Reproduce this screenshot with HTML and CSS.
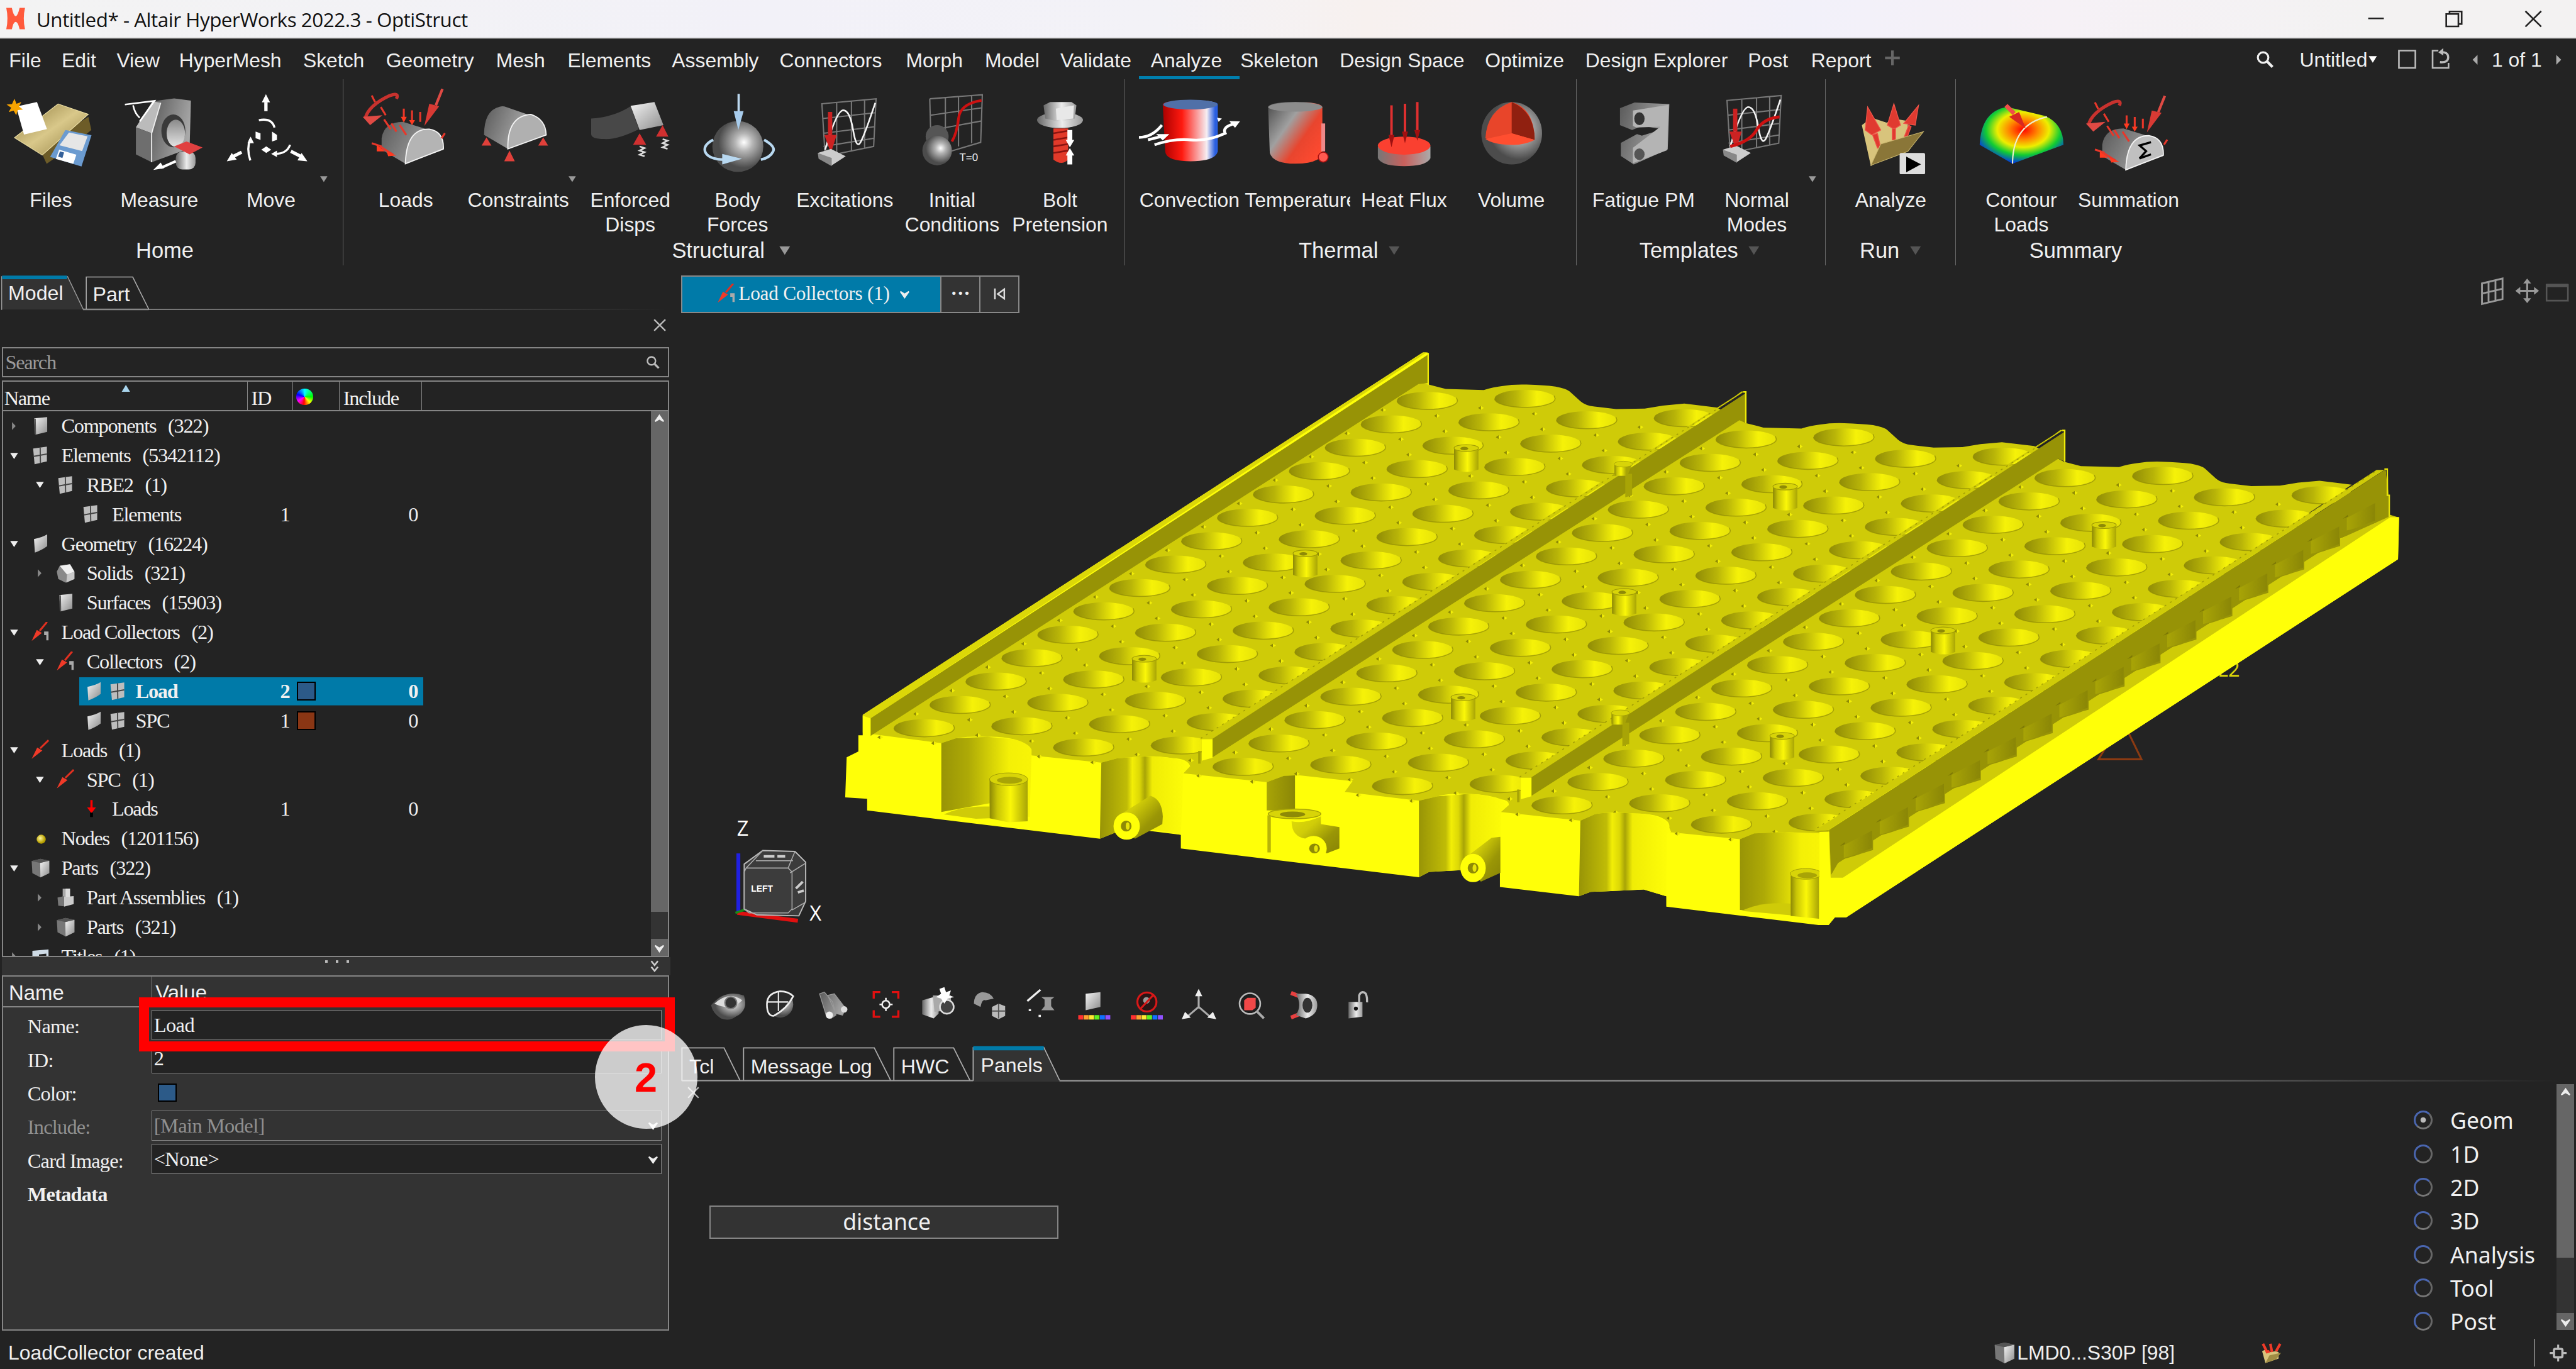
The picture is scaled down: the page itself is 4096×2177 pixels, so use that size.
FILE: index.html
```html
<!DOCTYPE html>
<html lang="en">
<head>
<meta charset="utf-8">
<title>Untitled* - Altair HyperWorks 2022.3 - OptiStruct</title>
<link rel="stylesheet" href="styles.css">
</head>
<body>
<svg class="defs" width="0" height="0" aria-hidden="true">
  <defs>
    <linearGradient id="steel" x1="0" x2="1"><stop offset="0" stop-color="#666"/><stop offset=".55" stop-color="#ececec"/><stop offset="1" stop-color="#9a9a9a"/></linearGradient>
    <linearGradient id="steelV" x1="0" x2="0" y2="1"><stop offset="0" stop-color="#8a8a8a"/><stop offset="1" stop-color="#e4e4e4"/></linearGradient>
    <linearGradient id="steelD" x1="0" x2="1" y2=".4"><stop offset="0" stop-color="#5a5a5a"/><stop offset="1" stop-color="#a8a8a8"/></linearGradient>
    <linearGradient id="paper" x1="0" x2="1" y2="1"><stop offset="0" stop-color="#f4f4f4"/><stop offset="1" stop-color="#8c8c8c"/></linearGradient>
    <linearGradient id="gold" x1="0" x2="1" y2="1"><stop offset="0" stop-color="#8d7a3c"/><stop offset=".5" stop-color="#d9c88a"/><stop offset="1" stop-color="#8d7a3c"/></linearGradient>
    <linearGradient id="hotcold" x1="0" x2="1"><stop offset="0" stop-color="#a00"/><stop offset=".35" stop-color="#ff1a10"/><stop offset=".8" stop-color="#f6eef2"/><stop offset=".95" stop-color="#2a5fe0"/></linearGradient>
    <linearGradient id="warm" x1="0" x2="1" y2=".8"><stop offset="0" stop-color="#4a4a4a"/><stop offset=".4" stop-color="#a0a0a0"/><stop offset=".68" stop-color="#e8452e"/><stop offset="1" stop-color="#ff4a30"/></linearGradient>
    <linearGradient id="puck" x1="0" x2="1"><stop offset="0" stop-color="#777"/><stop offset=".5" stop-color="#c9605c"/><stop offset="1" stop-color="#aaa"/></linearGradient>
    <radialGradient id="ball" cx=".62" cy=".42"><stop offset="0" stop-color="#fff"/><stop offset=".35" stop-color="#b4b4b4"/><stop offset="1" stop-color="#4c4c4c"/></radialGradient>
    <radialGradient id="contour" cx=".52" cy=".4" r=".62"><stop offset="0" stop-color="#f00"/><stop offset=".28" stop-color="#f80"/><stop offset=".5" stop-color="#ee0"/><stop offset=".72" stop-color="#1c3"/><stop offset="1" stop-color="#02f"/></radialGradient>
    <radialGradient id="nodeg" cx=".4" cy=".4"><stop offset="0" stop-color="#fff8a0"/><stop offset="1" stop-color="#b8a000"/></radialGradient>

    <symbol id="i-open" viewBox="0 0 10 10"><path d="M2 3h6L5 7.6z" fill="#eee"/></symbol>
    <symbol id="i-closed" viewBox="0 0 10 10"><path d="M3.400 2l2.800 3-2.800 3z" fill="#888"/></symbol>
    <symbol id="i-sheet" viewBox="0 0 14 14"><path d="M2.600 1.800L11.600 1v10L3.600 13z" fill="url(#paper)"/><path d="M2.600 1.800L3.800 2 4 13l-1-.4z" fill="#555"/></symbol>
    <symbol id="i-surf" viewBox="0 0 14 14"><path d="M2.600 4Q8 3 11.600.8v8Q8 11.500 3.200 13.200z" fill="url(#paper)"/></symbol>
    <symbol id="i-mesh" viewBox="0 0 14 14"><path d="M2 2.200L11.400 1v10L3 13z" fill="#bdbdbd"/><path d="M6.800 1.500L7 12M2.300 7.600L11.400 6" stroke="#444" stroke-width=".8"/></symbol>
    <symbol id="i-solid" viewBox="0 0 14 14"><path d="M1 6L3 2l7-1 3 5v5l-6 2.500L2 11z" fill="#8a8a8a"/><path d="M3 2l7-1 3 5-5 2z" fill="#f0f0f0"/><path d="M8 8l5-2v5l-5.500 2.500z" fill="#c8c8c8"/></symbol>
    <symbol id="i-box" viewBox="0 0 14 14"><path d="M1 2.200L7 .8l6 1.200v8.500L7 13.400 1.500 10.500z" fill="#777"/><path d="M6.800 3.500L13 2v8.500L7 13.400z" fill="url(#paper)"/><path d="M1 2.200L7 .8l6 1.200-6.200 1.500z" fill="#555"/></symbol>
    <symbol id="i-asm" viewBox="0 0 14 14"><path d="M5 1h5v6H5z" fill="#aaa"/><path d="M1.500 7L6 6v7l-4-.5z" fill="#777"/><path d="M6 6.500l6.500-.5v5.500L6 13.200z" fill="#ccc"/><path d="M7 1h3v5.500H7z" fill="#ddd"/></symbol>
    <symbol id="i-load" viewBox="0 0 14 14"><path d="M12.500.5L6.800 6" stroke="#e03020" stroke-width="1.300"/><path d="M1 13.200L4.800 5.500 8.300 7.500z" fill="#f03a28"/></symbol>
    <symbol id="i-loadcol" viewBox="0 0 14 14"><path d="M11.500 0L6.500 6" stroke="#e03020" stroke-width="1.300"/><path d="M1 13L4.500 5.500 8 7.500z" fill="#f03a28"/><path d="M9.500 6.500h3v6h-1.500V9H9.500z" fill="#aaa"/></symbol>
    <symbol id="i-down" viewBox="0 0 14 14"><path d="M7.500 1v5" stroke="red" stroke-width="1.500"/><path d="M4.500 6h6L7.500 10z" fill="red"/><path d="M7.500 9.500v3" stroke="#000" stroke-width="2"/></symbol>
    <symbol id="i-node" viewBox="0 0 14 14"><circle cx="7.500" cy="7.500" r="3.100" fill="url(#nodeg)"/></symbol>
    <symbol id="i-title" viewBox="0 0 14 14"><path d="M1.500 3l11-1v10l-11 2z" fill="#cfdbe6"/><path d="M6 5.500l5-.6v1.500l-5 .6zM3 10l7-1v1l-7 1z" fill="#222"/></symbol>
    <symbol id="i-find" viewBox="0 0 10 10"><circle cx="4" cy="4" r="2.900" fill="none" stroke="currentColor" stroke-width="1.100"/><path d="M6.200 6.200l3 3" stroke="currentColor" stroke-width="1.500"/></symbol>
    <symbol id="i-x" viewBox="0 0 10 10"><path d="M1 1l8 8M9 1L1 9" stroke="currentColor" stroke-width="1.100"/></symbol>
    <symbol id="i-chev" viewBox="0 0 10 10"><path d="M1.800 3.200L5 5.200l3.200-2L5 7.800z" fill="#eee" stroke="#eee"/></symbol>
    <symbol id="i-tri" viewBox="0 0 10 10"><path d="M0 1h10L5 9z" fill="currentColor"/></symbol>
  </defs>
</svg>

<div class="app">
  <header class="titlebar">
    <svg class="logo" viewBox="4 4 12 15"><path d="M4 5h3.400q1 5 2.300 5t2.400-5h3.300q-1.500 6.500 0 13h-3.300q-1-4.500-2.400-4.500T7.400 18H4q1.400-6.500 0-13z" fill="#ff5a3c"/></svg>
    <span class="title">Untitled* - Altair HyperWorks 2022.3 - OptiStruct</span>
    <svg class="winbtns" viewBox="1434 0 134 23"><g fill="none" stroke="#222" stroke-width="1"><path d="M1441.500 11.200h9.500M1489 8.500h7.400v7.600h-7.400zM1491 8.300V7h7.400v7.600h-1.800M1537.200 6.800l9.600 9.400M1546.800 6.800l-9.600 9.400"/></g></svg>
  </header>

  <nav class="menubar">
    <div class="menus">
      <span>File</span><span>Edit</span><span>View</span><span>HyperMesh</span><span>Sketch</span><span>Geometry</span><span>Mesh</span><span>Elements</span><span>Assembly</span><span>Connectors</span><span>Morph</span><span>Model</span><span>Validate</span><span class="on">Analyze</span><span>Skeleton</span><span>Design Space</span><span>Optimize</span><span>Design Explorer</span><span>Post</span><span>Report</span>
      <svg class="plus" viewBox="0 0 10 10"><path d="M5 .5v9M.5 5h9" stroke="#666" stroke-width="1.600"/></svg>
    </div>
    <div class="session">
      <svg class="find"><use href="#i-find"/></svg>
      <span class="sname">Untitled</span><svg class="tri"><use href="#i-tri"/></svg>
      <svg class="pages" viewBox="1456 28 40 16" fill="none" stroke="#bbb"><path d="M1460 30.500h10v10.500h-10zM1484 30.500h-3.500v10.500h9.700V38"/><path d="M1485 31.500q5-.5 5 3t-5 3" stroke-width="1.300"/><path d="M1487 29l-3 2.500 3 2z" fill="#bbb" stroke="none"/></svg>
      <svg class="pg" viewBox="0 0 5 10"><path d="M4 2v6L1 5z" fill="#aaa"/></svg>
      <span class="pgtext">1 of 1</span>
      <svg class="pg" viewBox="0 0 5 10"><path d="M1 2v6l3-3z" fill="#aaa"/></svg>
    </div>
  </nav>

  <section class="ribbon">
    <div class="group g-home">
      <div class="tools">
        <div class="tool"><svg viewBox="0 50 62 56">
          <path d="M53.800 71l1.800 8L42 90 28.400 99.600 24 90z" fill="#6d5c28"/><path d="M35.300 63.100L53.800 69.400 25.700 94.300 8.800 83.700z" fill="url(#gold)" stroke="#efe2a8" stroke-width=".4"/>
          <path d="M9.800 64.700L22.500 62l6.100 16.400-14 3.400z" fill="#fff"/><path d="M8.800 60l1.200 3 3-1-1.500 2.600 2.500 2-3.200.2-.9 3.200-1.600-2.800-3 .9 1.500-2.700L4 63.500l3.300-.3z" fill="#f9a400"/>
          <path d="M39.800 79l15.900 3.200-6.100 19-19.100-5.800z" fill="#6b9bd0"/><path d="M42 80.500l11.300 2.300-3.300 9-13.800-3.500z" fill="#e6e6e6"/><path d="M36 91l10.500 3-1.900 5.600-10.600-3z" fill="#fff"/><path d="M36.500 92l2.500.7-1 3.300-2.600-.8z" fill="#35619a"/></svg><p>Files</p></div>
        <div class="tool"><svg viewBox="62 50 70 56">
          <path d="M92.800 61.500L106 59.800l10.200 1.300-.8 29L92.300 98.600V81z" fill="url(#steelD)"/><path d="M92.800 61.500l5 .9L92.300 81l-9.600-3.600z" fill="#bbb"/><path d="M82.700 77.400L92.300 81v17.600L82.700 93.800z" fill="#6e6e6e"/><path d="M92.300 98.600V81l5.500-18.600" fill="none" stroke="#eee" stroke-width=".7"/>
          <ellipse cx="105.500" cy="79.500" rx="7.300" ry="10" fill="#3a3a3a"/><ellipse cx="107" cy="81" rx="5.600" ry="8.300" fill="url(#steelV)"/>
          <path d="M76 63.500l18-2.200-9 12.500M81 64q1 5 4 7.500" fill="none" stroke="#fff"/><rect x="107" y="92" width="12" height="11" rx="4" fill="url(#steel)"/><path d="M106 89l7.500-3 9.800 3.600-7.900 4.200z" fill="#e04040"/><path d="M107 98l-9 4" stroke="#fff" stroke-width="1.600"/><path d="M93.300 103.300l4.500-4.500 2 3.500z" fill="#fff"/></svg><p>Measure</p></div>
        <div class="tool"><svg viewBox="132 50 66 56"><g fill="#fff" stroke="#fff">
          <path d="M161.800 67.500V62M142 95l5-2.500M183 95l-6-3" stroke-width="2"/><path d="M161.800 57.200l2.500 5h-5zM138 98l3-5 3 4zM187 98l-6-.5 2.500-4.500z" stroke="none"/>
          <path d="M157.500 73q8-1.500 9.500 4.500M152.300 97.500q-2.500-7 0-13M176.500 88q-2 5.500-9 5.500" fill="none" stroke-width="1.300"/><path d="M152.500 83l2 4h-4zM165 93.500l3.500-2v4z" stroke="none"/>
          <path d="M155.500 80l3 1v4l-3-1zM165.500 80l3 2v3l-3 1zM162 89l3 2-3 2-3-2z" stroke="none"/></g></svg><p>Move</p></div>
        <svg class="more"><use href="#i-tri"/></svg>
      </div>
      <h2>Home</h2>
    </div>
    <div class="group g-structural">
      <div class="tools">
        <div class="tool w66"><svg viewBox="213.700 50 66 56">
          <path d="M232 84q1.500-10 13-10l16 5q9 1.500 8.600 12L246.500 99.500 232 91z" fill="url(#steelD)"/><path d="M246.500 99.500Q247 78 261 78.500q9 1.500 8.600 12z" fill="#b4b4b4" stroke="#f4f4f4" stroke-width=".7"/>
          <g id="loadset"><path d="M241 60q2-4-4-2-13 6-15 14" fill="none" stroke="#c8322e" stroke-width="2"/><path d="M220.500 71l12-1-7.500 6z" fill="#e04a44"/><path d="M269 54l-4 10" stroke="#e04a44" stroke-width="1.600"/><path d="M261 63l6 1.500-9 12z" fill="#d83a34"/><path d="M245.500 66v6M250.500 67v7M255.500 68v6M233.500 72.500l4 6M238 75l3 5M243 76l4 6M226 87l6 2M231 89l8 5M270.500 81l-2 3M226 58l2 4M231.500 65l3 5" stroke="#e8372a" stroke-width="1.200"/><path d="M243.700 71h3.600l-1.800 3.500zM248.700 73h3.600l-1.800 3zM229 88l5 4h-5zM235 92l6 2.500-5 .5z" fill="#ff3a20"/></g></svg><p>Loads</p></div>
        <div class="tool w71"><svg viewBox="279.700 50 71 56"><path d="M294.500 82q0-15 9.500-17.200 2-.6 4 .2l13 4.500q-11 3-12 21z" fill="url(#steelD)"/><path d="M309 90.500q-.5-20 14-21 9 3 9.300 12.500z" fill="#b0b0b0" stroke="#f4f4f4" stroke-width=".7"/><path d="M296 83.500l3 5h-6zM310 91.500l3.200 6.500h-6.400zM330.500 83.500l3 5h-6z" fill="#e0403a"/></svg><p>Constraints</p></div>
        <svg class="more mid"><use href="#i-tri"/></svg>
        <div class="tool w65"><svg viewBox="350.700 50 65.300 56"><path d="M359.500 72q14-1 24-7.500l5 14q-13 6.500-21 6-8 0-8-3z" fill="#484848"/><path d="M383.500 64.300L398 62l5.500 14-14.500 3z" fill="url(#paper)"/><path d="M389 81l4 7h-8zM403 76l3.500 7h-7.500z" fill="#d03030"/><path d="M389 89l3 1-3 1.500 3 1-3 1.500 3 1M403 84.500l3 1-3 1.500 3 1-3 1.500 3 1" stroke="#ddd" fill="none"/></svg><p>Enforced<br>Disps</p></div>
        <div class="tool w65"><svg viewBox="416 50 65.300 56"><circle cx="449" cy="89" r="15.500" fill="url(#ball)"/><path d="M449.500 57v14" stroke="#bcd8f0" stroke-width="1.400"/><path d="M446.500 67.500h6L449.300 79z" fill="#a8ccec"/><path d="M434 85q-6 3-5 7 2 5 12 5M465 85q7 4 5.500 7-2 4-7.500 5" fill="none" stroke="#b8d8f0" stroke-width="1.600"/><path d="M439.500 93.500l12 3-12 3.500z" fill="#b8d8f0"/></svg><p>Body<br>Forces</p></div>
        <div class="tool w65"><svg viewBox="481.300 50 65.300 56"><g id="plot"><path d="M500 63l33-3-1.500 29L502 95zM509 62v32M518 61.500V92M526 61v29M500.500 72l32-3.500M501 81l31-4M501 89l31-5" fill="none" stroke="#777" stroke-width=".8"/><path d="M502 91q7-24 11-24t6 12 4.500 7.500 9-24" fill="none" stroke="#f4f4f4" stroke-width="1"/><path d="M505 68v14" stroke="#c22" stroke-width="2.600"/><path d="M501.500 82h7.500l-3.500 11z" fill="#c22"/><path d="M497.500 93l8-2.500 9 4.500-8.500 5.500z" fill="#ccc"/><path d="M497.500 93l8.500 3v5l-8-4.500z" fill="#888"/></g></svg><p>Excitations</p></div>
        <div class="tool w65"><svg viewBox="546.600 50 65.300 56"><path d="M565.500 60l32-2.500-1 29L578 92M565.500 60l.5 18M575 59v20M583 59v30M591 58v29M566 70l31-4.500M567 79l30-5.500" fill="none" stroke="#777" stroke-width=".8"/><path d="M579 86q3-5 4-14t14-11" fill="none" stroke="#c11" stroke-width="1.600"/><circle cx="570" cy="83" r="7" fill="#555"/><circle cx="570" cy="91.500" r="9" fill="url(#ball)"/><text x="583.500" y="98" class="t0">T=0</text></svg><p>Initial<br>Conditions</p></div>
        <div class="tool w66"><svg viewBox="611.900 50 66 56"><path d="M641 78h9v19q-4 4-9 0z" fill="#e23a2a"/><path d="M641 81l9-1.500M641 85l9-1.500M641 89l9-1.500M641 93l9-1.500" stroke="#8a1410"/><ellipse cx="645" cy="73" rx="14" ry="4.800" fill="url(#steel)"/><path d="M635 64l4-2h13l3 2-1 8-9 2-9-2z" fill="url(#steel)"/><path d="M642.500 66l11-2-.5 8-10 1z" fill="#e8e8e8"/><path d="M651 79v7M651 100v-7" stroke="#fff" stroke-width="3"/><path d="M648.500 85h5.200L651 89.500zM648.500 94.500h5.200L651 90z" fill="#fff"/></svg><p>Bolt<br>Pretension</p></div>
      </div>
      <h2>Structural <svg class="htri lit"><use href="#i-tri"/></svg></h2>
    </div>
    <div class="group g-thermal">
      <div class="tools">
        <div class="tool w65"><svg viewBox="691.600 50 65.300 56"><path d="M708 63.500q0-2.500 17-2.500t16.500 2.500V92q-1.500 6-16.500 6t-15.500-6z" fill="url(#hotcold)"/><ellipse cx="724.800" cy="63.500" rx="16.500" ry="3" fill="#5070a8"/><path d="M693.500 83.500q8 0 14-7.500M699 85l8-2M703 88q12-4 22-3t21-4q-2-4 6-6" fill="none" stroke="#fff" stroke-width="1.700"/><path d="M704 81.500h8l-4 3.800zM748.500 73.500l6.500.2-3 4zM741 71.500l3 .5-2 2z" fill="#fff"/></svg><p>Convection</p></div>
        <div class="tool w65"><svg viewBox="756.900 50 65.300 56"><path d="M772 65q1-3 16.500-3T805 65v29q-3 5.500-16.500 5.500T773 93z" fill="url(#warm)"/><ellipse cx="788.500" cy="65" rx="16.500" ry="2.800" fill="#8c8c8c"/><path d="M805.500 75v17" stroke="#e88" stroke-width="2.400"/><circle cx="805.500" cy="95.500" r="3" fill="#ff5a50" stroke="#a11" stroke-width=".6"/></svg><p class="cut">Temperature</p></div>
        <div class="tool w65"><svg viewBox="822.200 50 65.300 56"><path d="M839 89v7q2 5 16 5t16-5v-7z" fill="url(#puck)"/><ellipse cx="855" cy="88.500" rx="16" ry="5.500" fill="#fa4030"/><path d="M847.300 64v22M855.500 63v20M863 62v20" stroke="#e03030" stroke-width="1.500"/><path d="M845.500 82h3.600l-1.800 7.500zM853.700 80h3.600l-1.800 7zM861.200 79h3.600l-1.800 6.500z" fill="#a01010"/></svg><p>Heat Flux</p></div>
        <div class="tool w65"><svg viewBox="887.500 50 65.300 56"><ellipse cx="920.300" cy="81" rx="18.500" ry="19" fill="url(#ball)"/><path d="M920.300 62q-15 5-16 22 8 4 16 3.500 8 0 14-4-1-18-14-21.500z" fill="#e8452a"/><path d="M920.300 62v19l14 4q0-17-14-23z" fill="#902010"/><path d="M904.300 84.500l16-3.500 14 4q-7 3.500-15 3-10 0-15-3.500z" fill="#ff4e30"/></svg><p>Volume</p></div>
      </div>
      <h2>Thermal <svg class="htri"><use href="#i-tri"/></svg></h2>
    </div>
    <div class="group g-templates">
      <div class="tools">
        <div class="tool w66"><svg viewBox="967 50 67 56"><path d="M986 65.500L995 62l21.500 1-1 28-21 9.300L986.500 95V87l10-5.500 3 1 13-4-13-2-6 2.500-7.500-3z" fill="url(#steelD)"/><path d="M994 67l22-3.500-1 28-21 8V90l17-13-15 .5-2-1z" fill="#b4b4b4"/><ellipse cx="998" cy="72" rx="3.200" ry="4" fill="#333"/><ellipse cx="998" cy="94" rx="3.200" ry="3.600" fill="#555"/></svg><p>Fatigue PM</p></div>
        <div class="tool w72"><svg viewBox="1033 50 72 56"><use href="#plot" x="551" y="-2"/><path d="M1053 89q12-3 16-10t14-8" fill="none" stroke="#c11" stroke-width="1.800"/></svg><p>Normal<br>Modes</p></div>
        <svg class="more"><use href="#i-tri"/></svg>
      </div>
      <h2>Templates <svg class="htri"><use href="#i-tri"/></svg></h2>
    </div>
    <div class="group g-run">
      <div class="tools">
        <div class="tool w79"><svg viewBox="1111.500 50 79 56"><path d="M1133.500 76l6-4.500 9 3 7-2 6 1v10l-22.500 17.500z" fill="#d8c47c"/><g fill="#e03a30" stroke="#f0554a" stroke-width=".5"><path d="M1137 65l8 14-5.500 3-4-3zM1153 63l4 13-4 2.500-4-2.500zM1168 64l-2 12-7-1z"/><path d="M1140 82l3 8h2l-2-9zM1152 78v8h2v-8zM1162 76l-3 8 1.500 1 3-8z"/></g><path d="M1139 100.500l6-13 26-7.500-9.500 12z" fill="#8a7638" stroke="#cbb870" stroke-width=".4"/><rect x="1156.500" y="93" width="15.500" height="13" rx="1" fill="#ddd"/><path d="M1160.500 95.200l9 4.700-9 4.800z" fill="#000"/></svg><p>Analyze</p></div>
      </div>
      <h2>Run <svg class="htri"><use href="#i-tri"/></svg></h2>
    </div>
    <div class="group g-summary">
      <div class="tools">
        <div class="tool w65"><svg viewBox="1197.800 50 65.300 56"><path d="M1205 88q1-21 17-23l23 5.500q11 5 11 17.500L1225 99.500z" fill="url(#contour)"/><path d="M1225 99.500q0-24 21-28.500" fill="none" stroke="#eec" stroke-width=".8"/><path d="M1221 64l5 5" stroke="#f05048" stroke-width="2.600"/><path d="M1223 71l6-3 4 10z" fill="#d82820"/></svg><p>Contour<br>Loads</p></div>
        <div class="tool w65"><svg viewBox="1263.100 50 66 56"><g transform="translate(1048 4)"><path d="M232 84q1.500-10 13-10l16 5q9 1.500 8.600 12L246.500 99.500 232 91z" fill="url(#steelD)"/><path d="M246.500 99.500Q247 78 261 78.500q9 1.500 8.600 12z" fill="#c0c0c0" stroke="#f4f4f4" stroke-width=".7"/><use href="#loadset" x="1.500"/><path d="M262 82.500l-7 2 4 3.500-4 4.500 7-2.500" fill="none" stroke="#000" stroke-width="1.300"/></g></svg><p>Summation</p></div>
      </div>
      <h2>Summary</h2>
    </div>
  </section>

  <main class="work">
    <aside class="left">
      <div class="tabs ltabs">
        <svg class="tabshape" viewBox="0 166 408 23" fill="none"><path d="M1.300 188.300V168h39.500l9.800 20.300z" fill="#333"/><path d="M1 188.500V168M41 168l9.700 20.200" stroke="#999" stroke-width=".6"/><path d="M1.300 168.700h39.500" stroke="#007aa8" stroke-width="2.200"/><path d="M50.500 188.200h40" stroke="#888" stroke-width=".9"/><path d="M52.500 188V168.500h28.300l9.800 19.700" stroke="#aaa" stroke-width=".6"/><path d="M90 187.900h316v.6H90z" fill="url(#fadeL)"/><defs><linearGradient id="fadeL"><stop offset="0" stop-color="#999"/><stop offset="1" stop-color="#232323"/></linearGradient></defs></svg>
        <span>Model</span><span>Part</span>
      </div>
      <div class="closebar"><svg><use href="#i-x"/></svg></div>
      <div class="search"><span>Search</span><svg><use href="#i-find"/></svg></div>
      <div class="tree">
        <div class="thead"><span>Name</span><span>ID</span><span><i class="wheel"></i></span><span>Include</span><svg class="sort" viewBox="0 0 6 5"><path d="M0 5l3-5 3 5z" fill="#a8d4ec"/></svg></div>
        <div class="tbody">
          <div class="rows">
            <div class="row d0"><div class="nm"><svg class="c"><use href="#i-closed"/></svg><svg class="ic"><use href="#i-sheet"/></svg><b>Components</b><em>(322)</em></div></div>
            <div class="row d0"><div class="nm"><svg class="c"><use href="#i-open"/></svg><svg class="ic"><use href="#i-mesh"/></svg><b>Elements</b><em>(5342112)</em></div></div>
            <div class="row d1"><div class="nm"><svg class="c"><use href="#i-open"/></svg><svg class="ic"><use href="#i-mesh"/></svg><b>RBE2</b><em>(1)</em></div></div>
            <div class="row d2"><div class="nm"><i class="c"></i><svg class="ic"><use href="#i-mesh"/></svg><b>Elements</b></div><span>1</span><i></i><span>0</span></div>
            <div class="row d0"><div class="nm"><svg class="c"><use href="#i-open"/></svg><svg class="ic"><use href="#i-surf"/></svg><b>Geometry</b><em>(16224)</em></div></div>
            <div class="row d1"><div class="nm"><svg class="c"><use href="#i-closed"/></svg><svg class="ic"><use href="#i-solid"/></svg><b>Solids</b><em>(321)</em></div></div>
            <div class="row d1"><div class="nm"><i class="c"></i><svg class="ic"><use href="#i-sheet"/></svg><b>Surfaces</b><em>(15903)</em></div></div>
            <div class="row d0"><div class="nm"><svg class="c"><use href="#i-open"/></svg><svg class="ic"><use href="#i-loadcol"/></svg><b>Load Collectors</b><em>(2)</em></div></div>
            <div class="row d1"><div class="nm"><svg class="c"><use href="#i-open"/></svg><svg class="ic"><use href="#i-loadcol"/></svg><b>Collectors</b><em>(2)</em></div></div>
            <div class="row d2 sel"><div class="nm"><i class="c"></i><svg class="ic"><use href="#i-surf"/></svg><svg class="ic"><use href="#i-mesh"/></svg><b>Load</b></div><span>2</span><i class="sw blue"></i><span>0</span></div>
            <div class="row d2 two"><div class="nm"><i class="c"></i><svg class="ic"><use href="#i-surf"/></svg><svg class="ic"><use href="#i-mesh"/></svg><b>SPC</b></div><span>1</span><i class="sw rust"></i><span>0</span></div>
            <div class="row d0"><div class="nm"><svg class="c"><use href="#i-open"/></svg><svg class="ic"><use href="#i-load"/></svg><b>Loads</b><em>(1)</em></div></div>
            <div class="row d1"><div class="nm"><svg class="c"><use href="#i-open"/></svg><svg class="ic"><use href="#i-load"/></svg><b>SPC</b><em>(1)</em></div></div>
            <div class="row d2"><div class="nm"><i class="c"></i><svg class="ic"><use href="#i-down"/></svg><b>Loads</b></div><span>1</span><i></i><span>0</span></div>
            <div class="row d0"><div class="nm"><i class="c"></i><svg class="ic"><use href="#i-node"/></svg><b>Nodes</b><em>(1201156)</em></div></div>
            <div class="row d0"><div class="nm"><svg class="c"><use href="#i-open"/></svg><svg class="ic"><use href="#i-box"/></svg><b>Parts</b><em>(322)</em></div></div>
            <div class="row d1"><div class="nm"><svg class="c"><use href="#i-closed"/></svg><svg class="ic"><use href="#i-asm"/></svg><b>Part Assemblies</b><em>(1)</em></div></div>
            <div class="row d1"><div class="nm"><svg class="c"><use href="#i-closed"/></svg><svg class="ic"><use href="#i-box"/></svg><b>Parts</b><em>(321)</em></div></div>
            <div class="row d0"><div class="nm"><svg class="c"><use href="#i-closed"/></svg><svg class="ic"><use href="#i-title"/></svg><b>Titles</b><em>(1)</em></div></div>
          </div>
          <div class="sbar"><svg class="up"><use href="#i-chev"/></svg><i class="track"></i><svg class="dn"><use href="#i-chev"/></svg></div>
        </div>
      </div>
      <div class="splitter"><span></span><i></i><i></i><i></i><svg viewBox="0 0 6 8"><path d="M1 .5l2 2.500L5 .5M1 4l2 2.500L5 4" fill="none" stroke="#ccc"/></svg></div>
      <div class="props">
        <div class="phead"><span>Name</span><span>Value</span></div>
        <div class="prow"><label>Name:</label><div class="field">Load</div></div>
        <div class="prow"><label>ID:</label><div class="field">2</div></div>
        <div class="prow"><label>Color:</label><div><i class="sw blue"></i></div></div>
        <div class="prow dis"><label>Include:</label><div class="field">[Main Model]<svg><use href="#i-chev"/></svg></div></div>
        <div class="prow"><label>Card Image:</label><div class="field">&lt;None&gt;<svg><use href="#i-chev"/></svg></div></div>
        <div class="prow meta"><label>Metadata</label></div>
      </div>
      <div class="hilite"></div>
      <div class="callout">2</div>
    </aside>

    <section class="right">
      <div class="viewport">
        <svg class="model" viewBox="1394.100 552.300 3886 1468.200">
          <defs>
            <linearGradient id="hg"><stop offset="0" stop-color="#908c06"/><stop offset=".35" stop-color="#b8b408"/><stop offset=".7" stop-color="#f6f208"/><stop offset="1" stop-color="#e6e208"/></linearGradient>
            <linearGradient id="ng"><stop offset="0" stop-color="#989406"/><stop offset=".3" stop-color="#aeaa06"/><stop offset=".75" stop-color="#f4f006"/><stop offset="1" stop-color="#f8f406"/></linearGradient>
            <linearGradient id="sg"><stop offset="0" stop-color="#989406"/><stop offset=".3" stop-color="#c0bc06"/><stop offset=".36" stop-color="#f2ee06"/><stop offset=".44" stop-color="#dcd806"/><stop offset=".5" stop-color="#a8a406"/><stop offset=".58" stop-color="#f0ec06"/><stop offset="1" stop-color="#ffff08"/></linearGradient>
            <linearGradient id="pg"><stop offset="0" stop-color="#8c8806"/><stop offset=".2" stop-color="#c8c406"/><stop offset=".55" stop-color="#fbf708"/><stop offset="1" stop-color="#a8a406"/></linearGradient>
            <linearGradient id="pipe" x1="0" y1="0" x2="1" y2=".9"><stop offset="0" stop-color="#e0dc08"/><stop offset=".35" stop-color="#d0cc08"/><stop offset=".7" stop-color="#9a9606"/><stop offset="1" stop-color="#8a8606"/></linearGradient>
            <linearGradient id="bumpg"><stop offset="0" stop-color="#a8a406"/><stop offset="1" stop-color="#8a8606"/></linearGradient>
            <g id="h1"><ellipse rx="62" ry="18" fill="url(#hg)"/><path d="M-62 0A62 18 0 0 0 62 0L60 -6" fill="none" stroke="#8e8a06" stroke-width="2" opacity=".7"/><path d="M-96 19l6-4v8zM14 31l6-4v8z" fill="#8e8a06"/><path d="M-84 19l-6-4v8zM26 31l-6-4v8z" fill="#f2ee08"/></g>
            <g id="h2"><use href="#h1"/><use href="#h1" x="-73.650" y="47.930"/></g>
            <g id="h4"><use href="#h2"/><use href="#h2" x="-147.300" y="95.900"/></g>
            <g id="h8"><use href="#h4"/><use href="#h4" x="-294.600" y="191.700"/></g>
            <g id="hcol"><use href="#h8"/><use href="#h4" x="-589.200" y="383.400"/><use href="#h2" x="-883.800" y="575.200"/><use href="#h1" x="-1031.100" y="671"/></g>
            <g id="post"><path d="M-25 0v44q25 10 50 0V0z" fill="url(#pg)"/><ellipse rx="25" ry="7" fill="#d8d408" stroke="#a09c06" stroke-width="1.500"/><ellipse cx="-4" cy="1" rx="8" ry="3.500" fill="#8e8a06"/></g>
            <g id="railpost"><path d="M-18-4h36l-8 20h8v44l-14 4V16l-22 0z" fill="#a8a406"/><path d="M-18-4h24v24h-24z" fill="url(#pg)"/><ellipse rx="19" ry="6" cy="-4" fill="#d8d408" stroke="#a09c06"/></g>
            <g id="bay"><use href="#hcol" x="2926" y="822"/><use href="#hcol" x="3126.200" y="817.800"/><use href="#hcol" x="3252.800" y="861.500"/><use href="#hcol" x="3453" y="857.300"/>
              <use href="#post" x="3006" y="919"/><use href="#post" x="2676" y="1135"/><use href="#post" x="2346" y="1351"/></g>
            <g id="rail"><path d="M3558 812l12-9h6L2486 1518v34h-22v-36h-4z" fill="#cfcb08"/><path d="M3550 820L2462 1514" stroke="#8e8a06" stroke-width="2" stroke-dasharray="4 9" opacity=".7"/><path d="M3580 806V868L3566 862 2486 1553V1515z" fill="#979306"/><path d="M3574 804h5v64" fill="none" stroke="#f0ec08" stroke-width="3"/><path d="M2464 1516h22v38l-22 6z" fill="#ffff08"/><path d="M2459 1540v26" stroke="#a8a406" stroke-width="5"/></g>
            <g id="b1"><path d="M0-30V0C-20 5-45 16-74 21L-74 18z" fill="#979306"/><path d="M-2-40V-4C-20 2-40 12-60 16V-10z" fill="url(#bumpg)"/><path d="M-68-8l10-8v4z" fill="#7c7806"/></g>
            <g id="b2"><use href="#b1"/><use href="#b1" x="-73.650" y="47.930"/></g>
            <g id="b4"><use href="#b2"/><use href="#b2" x="-147.300" y="95.900"/></g>
            <g id="b8"><use href="#b4"/><use href="#b4" x="-294.600" y="191.700"/></g>
          </defs>
          <text x="4546" y="1388" class="loadtag">L2</text>
          <path d="M4351 1477L4302 1557H4390z" fill="none" stroke="#8a3a12" stroke-width="4"/>
          <path d="M1769 1466L2917 723h10V850L4880 1090 4891 961v55h6v45h21L4916 1147 3785 1881h-23l-13 16h-21L3416 1859v-21l-46-14-109 5-24 9-162-19v-29l-74-6-71 4-21 11-488-59v-28l-81-10-55 6-30 12-477-58v-24l-45-3 3-82 24-12v-33h9z" fill="#ffff08"/>
          <path d="M1785 1505L2906 783l23 6 35 9 78 2q20-6 37-8 25-4 51-3 35 1 59 4 22 4 29 10l22 20q10 9 29 11l44 5 59-1 37-6 44-4 66 8 61 32 35 9 78 2q20-6 37-8 25-4 51-3 35 1 59 4 22 4 29 10l22 20q10 9 29 11l44 5 59-1 37-6 44-4 66 8 61 32 35 9 78 2q20-6 37-8 25-4 51-3 35 1 59 4 22 4 29 10l22 20q10 9 29 11l44 5 59-1 37-6 44-4 66 8L3749 1702v10l-90-6-63 3-29 12-147-15q6-14-2-22-18-16-69-16-60-4-80 2l-29 13-163-18 16-14q2-10-16-12-25-10-65-11-40-2-65 5l-38 9-152-18 16-22-108-12-33 1-35 13-171-18 14-15q-5-15-35-16-30-5-65-4l-49 4-33 9-143-15q0-20-36-33-27-6-54-5-40-2-65 3l-30 10z" fill="#cfcb08"/>
          <use href="#bay"/>
          <use href="#rail"/>
          <use href="#bay" x="653.700" y="79"/>
          <use href="#railpost" x="3328" y="956"/>
          <use href="#rail" x="653.700" y="79"/>
          <use href="#bay" x="1307.400" y="158"/>
          <use href="#railpost" x="3322" y="1466"/>
          <path d="M2917 723h8L1785 1473v35l-16-6V1466z" fill="#dcd808"/><path d="M2927 728V786l-19 2L1785 1509V1473z" fill="#979306"/><path d="M1769 1468l16 5v36h-16z" fill="#ffff08"/><path d="M2928 724v66" stroke="#f0ec08" stroke-width="3"/>
          <path d="M4895 965l3 96-13-5L3749 1702 3752 1810 3785 1799 4916 1061 4897 1055z" fill="#cfcb08"/>
          <path d="M4872 964h16L3749 1702l-30 2z" fill="#cfcb08"/><path d="M4868 968L3722 1700" stroke="#8e8a06" stroke-width="2" stroke-dasharray="4 9" opacity=".7"/>
          <path d="M4890 963l7 52v45l-100 45L3768 1770l-14 24-4-92z" fill="#979306"/>
          <g transform="translate(4871 1072)"><use href="#b8"/><use href="#b4" x="-589.200" y="383.400"/><use href="#b2" x="-883.800" y="575.200"/><use href="#b1" x="-1031.100" y="671"/></g>
          <path d="M4888 962l6 0v54h4v45" fill="none" stroke="#e8e408" stroke-width="3"/>
          <path d="M4900 1061h18L4916 1147 3785 1881h-36V1702l4 98h25z" fill="#ffff08"/>
          <path d="M1930 1524l30-10 65-3 54 5q30 8 36 21v12l-4 126-40-4-30-26-111 20z" fill="url(#ng)"/>
          <path d="M1935 1670q40-18 94-16v24l-28 1z" fill="#cfcb08"/>
          <path d="M2029 1598h78v86l-40 2-38-8z" fill="url(#pg)"/><ellipse cx="2068" cy="1598" rx="39" ry="13" fill="#d8d408" stroke="#8e8a06"/><ellipse cx="2070" cy="1600" rx="26" ry="7" fill="#a8a406"/>
          <path d="M2258 1564l33-9 49-4q40 0 65 4 30 6 35 16l-14 15-5 126q-60-14-81-10l-55 6-30 12z" fill="url(#sg)"/>
          <path d="M2288 1676l70-44q24 6 26 42l-1 16-56 30z" fill="url(#pipe)"/><ellipse cx="2310" cy="1694" rx="27" ry="28" fill="#ffff08"/><ellipse cx="2309" cy="1694" rx="11" ry="11" fill="#8e8a06"/><ellipse cx="2312" cy="1694" rx="4" ry="8" fill="#e8e408"/>
          <path d="M2597 1604l35-13 23-1v72h-58z" fill="url(#bumpg)"/>
          <path d="M2600 1672h110v28l-60 16-36 36-14-2z" fill="#ffff08"/><ellipse cx="2654" cy="1669" rx="54" ry="10" fill="#d8d408" stroke="#a8a406" stroke-width="2"/><ellipse cx="2650" cy="1670" rx="26" ry="6" fill="#8e8a06"/><path d="M2602 1672v76" stroke="#b8b408" stroke-width="7"/>
          <path d="M2648 1684q26 6 60-10v16l38 6v44l-26 10-42-30q-30-4-30-36z" fill="url(#pipe)"/><ellipse cx="2693" cy="1740" rx="27" ry="26" fill="#ffff08"/><ellipse cx="2695" cy="1740" rx="11" ry="10" fill="#8e8a06"/><ellipse cx="2698" cy="1740" rx="4" ry="7" fill="#e8e408"/>
          <path d="M2909 1642l38-9 65-5q40 2 65 11l16 12-16 14-2 125q-40-6-74-6l-71 4-21 11z" fill="url(#sg)"/>
          <path d="M3000 1762l58-44 18-2v74l-40 18z" fill="url(#pipe)"/><ellipse cx="3020" cy="1780" rx="26" ry="29" fill="#ffff08"/><ellipse cx="3020" cy="1780" rx="11" ry="11" fill="#8e8a06"/><ellipse cx="3023" cy="1780" rx="4" ry="8" fill="#e8e408"/>
          <path d="M3240 1683l29-13q20-6 80-2 51 0 69 20l8 18-8 4-2 128-46-14-109 5-24 9z" fill="url(#sg)"/>
          <path d="M3567 1721l29-12 63-3 75 3v165l-167-8z" fill="url(#ng)"/><path d="M3570 1868q40-20 101-15v24z" fill="#cfcb08"/>
          <path d="M3671 1796h58v88l-58-6z" fill="url(#pg)"/><ellipse cx="3702" cy="1792" rx="32" ry="11" fill="#d8d408" stroke="#8e8a06"/><ellipse cx="3705" cy="1795" rx="20" ry="6" fill="#a8a406"/>
          <path d="M3730 1706h20v188h-20z" fill="#ffff08"/>
          <g class="cube">
            <path d="M1514 1870V1750" stroke="#2020e0" stroke-width="8"/><path d="M1512 1872l124 16" stroke="#e01010" stroke-width="8"/><path d="M1508 1872l40-14" stroke="#1a8a1a" stroke-width="5"/>
            <path d="M1526 1772l38-28 66 2 22 22v80l-14 30-86-2-26-12z" fill="#3c3c3c" stroke="#bbb" stroke-width="2.500"/><path d="M1530 1780h86l8 8v76l-8 8h-80l-10-8v-76zM1616 1780l14-34M1620 1790l32-20M1530 1780l34-36M1624 1866l28-16M1550 1765h76" fill="none" stroke="#aaa" stroke-width="2"/>
            <text x="1540" y="1828" class="cubetext">LEFT</text><path d="M1632 1822l14-14M1636 1830l12-4M1566 1756h22M1594 1756h16" stroke="#ccc" stroke-width="5"/>
            <text x="1511" y="1714" class="axis">Z</text><text x="1660" y="1888" class="axis">X</text>
          </g>
        </svg>
        <div class="chips">
          <div class="chip"><svg class="ic"><use href="#i-loadcol"/></svg><span>Load Collectors (1)</span><svg class="cv"><use href="#i-chev"/></svg></div>
          <div class="chip2">···</div>
          <div class="chip2"><svg viewBox="0 0 10 10"><path d="M2 1.500v7M8 2v6L3.800 5z" fill="none" stroke="#ddd" stroke-width="1"/></svg></div>
        </div>
        <svg class="viewtools" viewBox="1508 168 58 18" fill="none" stroke="#999"><path d="M1510.500 172.500l12.500-3v12.500l-12.500 3zM1514.500 171.500v12.500M1518.700 170.500v12.500M1510.500 178.700l12.500-3" stroke-width="1.100"/><path d="M1538 171v12M1532 177h12" stroke-width="1.200"/><path d="M1538 169.500l2.400 3h-4.800zM1538 184.500l2.400-3h-4.800zM1530.800 177l3-2.400v4.800zM1545.200 177l-3-2.400v4.800z" fill="#999" stroke="none"/><path d="M1549.800 173.500h13v9.500h-13z" stroke="#555"/><path d="M1549.500 172.700h13.600v2h-13.600z" fill="#555" stroke="none"/></svg>
      </div>

      <svg class="viewbar" viewBox="414 598 1154 28">
        <path d="M433 612q8-10 20-6 3 9-5 13-4 3-9 1-5-3-6-8z" fill="url(#ball)"/><path d="M435 611q9-8 17-2-7 7-17 2z" fill="#ddd"/><circle cx="445" cy="610.500" r="3.600" fill="#333" stroke="#777" stroke-width=".8"/>
        <circle cx="475" cy="611.500" r="8" fill="url(#ball)"/><path d="M475 603.500q-8 1-8 8t4 7q8-4 12-12-3-3-8-3z" fill="#2a2a2a" stroke="#eee" stroke-width="1"/><path d="M474 603.500v12M467 610h13" stroke="#eee" stroke-width=".8"/>
        <path d="M499 605l3-1 5 6 2 8-3 2-3-2zM504 606l4-1 7 9-2 4-4-1z" fill="url(#steelD)" stroke="#999" stroke-width=".5"/><circle cx="505" cy="618" r="2.200" fill="#eee"/><circle cx="514" cy="614.500" r="2" fill="#ddd"/>
        <path d="M532 608v-4h4M543 604h4v4M547 615v4h-4M536 619h-4v-4" fill="none" stroke="#e01010" stroke-width="1.300"/><circle cx="539.400" cy="611.500" r="2.300" fill="none" stroke="#eee"/><path d="M539.400 607.500v2M539.400 613.500v2M535.500 611.500h2M541.500 611.500h2" stroke="#eee"/>
        <path d="M561.500 609l7-2 3 2v8l-3 3-7-2.500z" fill="url(#steel)"/><path d="M568 606h11v9l-10 1z" fill="#aaa"/><circle cx="576.500" cy="613" r="4.200" fill="#444" stroke="#ddd"/><path d="M575 601l1 3 3-1-1 3 3 1-4 1-2 3-2-3-3-1 3-2-1-3z" fill="#fff"/>
        <path d="M593 611q0-6 5-7 5 0 7 4l-5 1q-2-1-3 4z" fill="#999"/><path d="M604 613l4-2 4 1.500v6l-4 2-4-2z" fill="#bbb"/><path d="M608 611v9M604 615.500h8" stroke="#555" stroke-width=".7"/>
        <path d="M633 603l-7 6M627 615h.1M633 618.500h.1" stroke="#eee" stroke-width="1.300" stroke-linecap="square"/><path d="M634 607h8l-2 1.500v4l2 2.500h-8l2-2.500v-4z" fill="#999"/>
        <path d="M661 605l9-1v9l-9 2z" fill="url(#paper)"/>
        <g id="rainbow"><path d="M656.500 618h3v2.700h-3z" fill="#ff3030"/><path d="M659.800 618h3v2.700h-3z" fill="#ffa030"/><path d="M663.100 618h3v2.700h-3z" fill="#ffe830"/><path d="M666.400 618h3v2.700h-3z" fill="#60f020"/><path d="M669.700 618h3v2.700h-3z" fill="#1070ff"/><path d="M673 618h3v2.700h-3z" fill="#9050ff"/></g>
        <use href="#rainbow" x="32"/><circle cx="698.300" cy="610" r="5.800" fill="#2a1515" stroke="#d81818" stroke-width="1.200"/><circle cx="698" cy="609" r="2" fill="#999"/><path d="M694.500 614l7.500-8" stroke="#d81818" stroke-width="1.200"/>
        <path d="M729.800 606v8M729.800 613l-7 6M729.800 613l7 6" stroke="#aaa" stroke-width="1.200"/><path d="M729.800 602l2.200 4.500h-4.400zM719.500 620.500l2-4.500 3.500 3.500zM740.500 620.500l-2-4.500-3.500 3.500z" fill="#eee"/>
        <circle cx="761" cy="611" r="6.300" fill="#1e1e1e" stroke="#bbb"/><path d="M765 615.500l4.500 4.500" stroke="#aaa" stroke-width="1.500"/><path d="M757.500 609l2-1.500h5v6l-2 1.500h-5z" fill="#f04848"/>
        <path d="M786 604.500l5 2M786 619.500l5-2" stroke="#e84040" stroke-width="2.400"/><path d="M789 605h6q7 1 7 7t-7 8l-6-2q4-6 0-13z" fill="url(#steel)"/><ellipse cx="796" cy="612" rx="3" ry="4.500" fill="#333"/>
        <path d="M821 610h8.500v9l-8.500 1z" fill="url(#steel)"/><path d="M827.500 610v-4q1-2.500 3-1.800 2 .8 1.800 6" fill="none" stroke="#bbb" stroke-width="1.300"/><circle cx="825.500" cy="614" r="1.200" fill="#111"/>
      </svg>

      <div class="tabs btabs">
        <svg class="tabshape" viewBox="414 634 1154 25" fill="none"><defs><linearGradient id="fadeB"><stop offset="0" stop-color="#999"/><stop offset=".6" stop-color="#888"/><stop offset="1" stop-color="#232323"/></linearGradient></defs><path d="M592.500 658.500V638h42.500l10 20.500z" fill="#333"/><path d="M415.200 658v-20h25.600l9.700 19.700M452.700 658v-20h79.600l9.900 19.700M544.200 658v-20h36.400l9.900 19.700M592.500 658v-20.500M635.400 637.500l9.700 20.200" stroke="#aaa" stroke-width=".7"/><path d="M415 657.900h177.500" stroke="#999" stroke-width=".9"/><path d="M592.500 638.200h43" stroke="#007aa8" stroke-width="2.600"/><path d="M645 657.500h915v.9H645z" fill="url(#fadeB)"/></svg>
        <span>Tcl</span><span>Message Log</span><span>HWC</span><span>Panels</span>
      </div>
      <div class="panel">
        <svg class="px"><use href="#i-x"/></svg>
        <button class="distance">distance</button>
        <ul class="radios"><li class="on">Geom</li><li>1D</li><li>2D</li><li>3D</li><li>Analysis</li><li>Tool</li><li>Post</li></ul>
        <div class="sbar rs"><svg class="up"><use href="#i-chev"/></svg><i class="track"></i><svg class="dn"><use href="#i-chev"/></svg></div>
      </div>
    </section>
  </main>

  <footer class="status">
    <span class="msg">LoadCollector created</span>
    <svg class="ic"><use href="#i-box"/></svg><span class="part">LMD0...S30P [98]</span>
    <svg class="fire" viewBox="0 0 14 14"><path d="M1.500 6l2-1 3 1.500 3-.5 2 .5v4L3.500 13.200z" fill="#d8c47c"/><path d="M2 1.500l2.500 5L6 6M6.500 1.500l1 5M12.500 1.500L10 6" stroke="#f03a28" stroke-width="1.600" fill="none"/><path d="M3.500 13.200L6 8.500l7-1.500-3 4z" fill="#a08c44"/></svg>
    <i class="vsep"></i>
    <svg class="target" viewBox="0 0 14 14"><rect x="4" y="4" width="6" height="6" rx="1" fill="none" stroke="#bbb" stroke-width="1.600"/><path d="M7 1v3M7 10v3M1 7h3M10 7h3" stroke="#bbb" stroke-width="1.400"/></svg>
  </footer>
</div>
</body>
</html>
```
FILE: styles.css
```css
/* 1rem is ten layout units */
html { font-size: 26.1224px; }
* { box-sizing: border-box; }
body { margin: 0; background: #232323; color: #f0f0f0; font-family: "Liberation Sans", Arial, sans-serif; font-size: 1.22rem; line-height: 1.46rem; overflow: hidden; }
svg { display: block; flex: none; }
i { font-style: normal; }
p, h2, ul { margin: 0; padding: 0; }
.defs { position: absolute; }
.app { width: 156.8rem; height: 83.33rem; display: flex; flex-direction: column; overflow: hidden; }

/* title bar */
.titlebar { height: 2.36rem; flex: none; display: flex; align-items: center; color: #111; border-bottom: .08rem solid #777;
  background: linear-gradient(90deg, #f3f3f3 0, #f2f1f8 30%, #f3f2f7 45%, #f7f1ef 53%, #f5f1f5 62%, #f2f1fa 70%, #f6f1f6 80%, #f3f2f2 92%); }
.logo { width: 1.2rem; height: 1.5rem; margin-left: .4rem; }
.title { font-family: "Open Sans", sans-serif; font-size: 1.2rem; margin: .08rem 0 0 .62rem; flex: 1; white-space: nowrap; letter-spacing: -.017rem; }
.winbtns { width: 13.4rem; height: 2.3rem; }

/* menus */
.menubar { height: 2.46rem; flex: none; display: flex; justify-content: space-between; }
.menus { display: grid; padding-left: .55rem; white-space: nowrap;
  grid-template-columns: 3.2rem 3.35rem 3.8rem 7.55rem 5.05rem 6.7rem 4.35rem 6.35rem 6.55rem 7.7rem 4.8rem 4.6rem 5.5rem 5.45rem 6.05rem 8.85rem 6.1rem 9.9rem 3.85rem 4.5rem 1rem; }
.menus span { padding-top: .58rem; }
.menus .on { margin-left: -.7rem; padding-left: .7rem; margin-right: .05rem; border-bottom: .2rem solid #007fae; height: 2.47rem; }
.plus { width: 1rem; height: 1rem; margin: .68rem 0 0 -.05rem; }
.session { display: flex; align-items: center; height: 2.54rem; padding-right: .7rem; }
.find { width: 1.1rem; height: 1.1rem; }
.sname { margin-left: 1.55rem; }
.session .tri { width: .6rem; height: .5rem; margin: 0 .9rem 0 0; color: #fff; }
.pages { width: 4rem; height: 1.6rem; }
.pg { width: .5rem; height: 1rem; margin: 0 .78rem; }
.session .pg:last-child { margin-right: .1rem; }
.pgtext { white-space: nowrap; }

/* ribbon */
.ribbon { height: 11.9rem; flex: none; display: flex; }
.group { height: 11.35rem; border-right: .07rem solid #666; }
.group.g-summary { border: 0; }
.tools { display: flex; height: 9.65rem; padding-top: .2rem; }
.tool { text-align: center; }
.tool svg { height: 5.6rem; }
.tool p { margin-top: .83rem; line-height: 1.48rem; white-space: nowrap; }
.tool p.cut { text-align: left; padding-left: .1rem; overflow: hidden; width: 6.53rem; }
.g-home .tool:nth-child(1), .g-home .tool:nth-child(1) svg { width: 6.2rem; }
.g-home .tool:nth-child(2), .g-home .tool:nth-child(2) svg { width: 7rem; }
.g-home .tool:nth-child(3), .g-home .tool:nth-child(3) svg { width: 6.6rem; }
.w65, .w65 > svg { width: 6.53rem; }
.w66, .w66 > svg { width: 6.6rem; }
.w72, .w72 > svg { width: 7.2rem; }
.w71, .w71 > svg { width: 7.1rem; }
.w79, .w79 > svg { width: 7.9rem; }
.more { width: .45rem; height: .45rem; margin: 5.65rem 0 0 -.3rem; color: #999; }
.more.mid { margin: 5.65rem .05rem 0 -.5rem; }
.g-templates .more { margin-left: -.45rem; }
.group h2 { font-size: 1.32rem; line-height: 1.6rem; font-weight: 400; text-align: center; display: flex; justify-content: center; align-items: center; margin-top: 0; }
.htri { width: .75rem; height: .65rem; margin-left: .6rem; color: #555; }
.htri.lit { color: #999; }
.g-home { width: 20.9rem; } .g-home h2 { padding-right: .8rem; }
.g-structural { width: 47.54rem; padding-left: .5rem; } .g-structural h2 { justify-content: flex-start; padding-left: 19.5rem; }
.g-structural .htri { margin-left: .85rem; }
.g-thermal { width: 27.55rem; padding-left: .7rem; } .g-thermal h2 { padding-right: .8rem; }
.g-templates { width: 15.15rem; padding-left: .75rem; } .g-templates h2 { padding-right: .9rem; }
.g-run { width: 7.93rem; }
.g-summary { padding-left: .7rem; } .g-summary h2 { padding-left: .1rem; }

/* work area */
.work { flex: 1; display: flex; min-height: 0; }
.left { width: 41.4rem; position: relative; display: flex; flex-direction: column; font-family: "Liberation Serif", "Times New Roman", serif; font-size: 1.24rem; letter-spacing: -.05rem; }
.tabs { position: relative; font-family: "Liberation Sans", Arial, sans-serif; font-size: 1.23rem; letter-spacing: 0; white-space: nowrap; display: flex; }
.tabs span { position: relative; }
.tabshape { position: absolute; left: 0; top: 0; }
.ltabs { height: 2.2rem; padding-left: .5rem; }
.ltabs .tabshape { width: 40.8rem; height: 2.3rem; top: -.12rem; }
.ltabs span { width: 5.15rem; padding-top: .4rem; }
.ltabs span + span { padding-top: .46rem; }
.closebar { height: 2.2rem; }
.closebar svg { width: .85rem; height: .85rem; margin: .45rem 0 0 39.75rem; color: #bbb; }
.search { width: 40.65rem; height: 1.85rem; margin: 0 0 .2rem .1rem; border: .08rem solid #858585; display: flex; justify-content: space-between; align-items: center; color: #9a9a9a; padding: 0 .5rem 0 .15rem; }
.search svg { width: .85rem; height: .85rem; color: #bbb; }
.tree { width: 40.65rem; height: 35.1rem; margin-left: .1rem; border: .08rem solid #858585; display: flex; flex-direction: column; }
.thead { position: relative; height: 1.78rem; flex: none; display: grid; grid-template-columns: 14.9rem 2.75rem 2.85rem 5rem 1fr; border-bottom: .08rem solid #858585; }
.thead span { border-right: .06rem solid #858585; padding: .26rem 0 0 .22rem; }
.thead span:first-child { padding-left: .08rem; }
.wheel { display: block; width: 1rem; height: 1rem; margin-top: .16rem; border-radius: 50%; background: conic-gradient(cyan, lime 25%, yellow 38%, red 52%, magenta 66%, blue 80%, cyan); }
.sort { position: absolute; left: 7.2rem; top: .2rem; width: .55rem; height: .42rem; }
.tbody { flex: 1; display: flex; min-height: 0; overflow: hidden; }
.rows { flex: 1; }
.row { height: 1.795rem; width: 25.6rem; display: grid; grid-template-columns: 14.9rem 2.55rem 3.55rem 4.25rem; align-items: center; }
.row > span { text-align: right; }
.nm { display: flex; align-items: center; white-space: nowrap; }
.nm b { font-weight: 400; margin-left: .65rem; }
.nm em { font-style: normal; margin-left: .72rem; letter-spacing: -.045rem; }
.c { width: .8rem; height: .8rem; margin-left: .3rem; flex: none; }
.ic { width: 1.25rem; height: 1.25rem; margin-left: .56rem; }
.d1 .nm { padding-left: 1.54rem; }
.d2 .nm { padding-left: 3.08rem; }
.sel .ic, .two .ic { margin-left: .2rem; }
.sel .c + .ic, .two .c + .ic { margin-left: .75rem; }
.sel .nm b, .two .nm b { margin-left: .45rem; }
.sel { background: linear-gradient(90deg, transparent 4.65rem, #007aa8 4.65rem); background-size: 100% 1.71rem; background-repeat: no-repeat; background-position: 0 .05rem; font-weight: 700; }
.sel .nm b { font-weight: 700; }
.sw { display: block; width: 1.14rem; height: 1.12rem; border: .08rem solid #000; margin-left: .45rem; }
.blue { background: #2c5a88; }
.rust { background: #8a3614; }
.sbar { width: 1.05rem; background: #666; display: flex; flex-direction: column; justify-content: space-between; align-items: center; }
.sbar svg { width: .8rem; height: .8rem; }
.sbar .up { transform: rotate(180deg); margin-top: .1rem; }
.sbar .track { width: 100%; height: 1.65rem; background: #333; margin-top: auto; }
.sbar .dn { margin: .15rem 0 .1rem; }
.splitter { width: 40.7rem; margin-left: .1rem; height: 1.1rem; background: #333; display: flex; gap: .5rem; padding-top: .2rem; }
.splitter i { width: .15rem; height: .15rem; background: #bbb; }
.splitter span { width: 19.2rem; }
.splitter svg { width: .6rem; height: .8rem; margin-left: 17.8rem; }
.props { width: 40.65rem; height: 21.65rem; margin-left: .1rem; border: .08rem solid #858585; background: #333; }
.phead { font-family: "Liberation Sans", Arial, sans-serif; font-size: 1.26rem; letter-spacing: 0; height: 1.9rem; display: grid; grid-template-columns: 9.05rem 1fr; border-bottom: .08rem solid #858585; margin-bottom: .13rem; }
.phead span { padding: .28rem 0 0 .36rem; }
.phead span + span { padding-left: .2rem; border-left: .06rem solid #858585; }
.prow { height: 2.04rem; display: grid; grid-template-columns: 9.05rem 31.05rem; align-items: center; padding-bottom: .2rem; }
.prow label { padding: .2rem 0 0 1.5rem; letter-spacing: -.03rem; white-space: nowrap; }
.field { height: 1.84rem; border: .07rem solid #858585; background: #232323; display: flex; justify-content: space-between; align-items: center; padding: 0 .1rem; letter-spacing: -.02rem; }
.field svg { width: .8rem; height: .8rem; }
.prow .sw { margin-left: .4rem; margin-top: .08rem; }
.dis { color: #909090; } .dis .field { background: #333; }
.meta { font-weight: 700; }
.hilite { position: absolute; left: 8.46rem; top: 44rem; width: 32.62rem; height: 3.28rem; border: .62rem solid red; }
.callout { position: absolute; left: 36.2rem; top: 45.68rem; width: 6.24rem; height: 6.32rem; border-radius: 50%; background: rgba(255,255,255,.77); color: red; font: 700 2.48rem/6.4rem "Liberation Sans", Arial, sans-serif; text-align: center; z-index: 3; letter-spacing: 0; }

.right { flex: 1; display: flex; flex-direction: column; min-width: 0; }
.viewport { position: relative; height: 43.05rem; flex: none; }
.model { position: absolute; left: 0; top: -.32rem; width: 115.4rem; height: 43.6rem; }
.loadtag { font: 42px "Noto Sans", "Open Sans", sans-serif; fill: #d8d408; }
.axis { font: 42px "Open Sans", sans-serif; fill: #fff; }
.cubetext { font: 700 18px "Liberation Sans", sans-serif; fill: #fff; }
.t0 { font: 6.5px "Liberation Sans", sans-serif; fill: #eee; }
.chips { position: absolute; left: .05rem; top: .03rem; display: flex; height: 2.3rem; font-family: "Liberation Serif", serif; font-size: 1.2rem; }
.chip { width: 15.85rem; background: #007aa8; border: .08rem solid #888; display: flex; align-items: center; padding-left: 1.5rem; }
.chip span { margin-left: .12rem; white-space: nowrap; letter-spacing: -.01rem; }
.cv { width: .8rem; height: .8rem; margin-left: .5rem; }
.chip2 { width: 2.4rem; border: .08rem solid #888; border-left: 0; background: #333; display: flex; align-items: center; justify-content: center; font-weight: 700; }
.chip2 + .chip2 { width: 2.35rem; }
.chip2 svg { width: .95rem; height: .95rem; }
.viewtools { position: absolute; right: .17rem; top: .1rem; width: 5.8rem; height: 1.8rem; }
.viewbar { width: 115.4rem; height: 2.8rem; margin-top: .03rem; }
.btabs { height: 2.5rem; margin-top: .8rem; padding-left: .56rem; }
.btabs .tabshape { width: 115.4rem; height: 2.5rem; }
.btabs span { padding-top: .8rem; width: 3.74rem; }
.btabs span:nth-of-type(2) { width: 9.15rem; }
.btabs span:nth-of-type(3) { width: 4.85rem; }
.btabs span:nth-of-type(4) { padding-top: .74rem; }
.panel { flex: 1; display: flex; position: relative; font-family: "Noto Sans", "Open Sans", sans-serif; font-size: 1.36rem; min-height: 0; }
.px { width: .8rem; height: .8rem; margin: .2rem 0 0 .4rem; color: #bbb; }
.distance { font: inherit; line-height: 1.6rem; color: #f0f0f0; width: 21.25rem; height: 2.04rem; margin: 7.47rem 0 0 .58rem; padding: 0 0 .05rem .35rem; background: #333; border: .08rem solid #858585; }
.radios { list-style: none; margin: 1.27rem 0 0 82.5rem; width: 8.7rem; }
.radios li { height: 2.043rem; display: flex; align-items: center; gap: 1.07rem; }
.radios li::before { content: ""; width: .92rem; height: .92rem; border-radius: 50%; border: .12rem solid #4a66b0; border-right-color: #666; border-bottom-color: #777; }
.radios .on::before { background: radial-gradient(circle, #bbb 0 .15rem, transparent .18rem); }
.rs { position: absolute; right: .12rem; top: .1rem; height: 14.97rem; }
.rs .track { height: 3.35rem; }

/* status bar */
.status { height: 2.2rem; flex: none; display: flex; align-items: center; padding: .25rem 0 0 .5rem; white-space: nowrap; }
.msg { width: 120.8rem; flex: none; }
.status .ic { margin-left: 0; width: 1.4rem; height: 1.4rem; }
.part { width: 14.85rem; padding-left: .08rem; flex: none; }
.fire { width: 1.4rem; height: 1.4rem; }
.vsep { width: .07rem; height: 1.7rem; background: #777; margin-left: 15.3rem; }
.target { width: 1.2rem; height: 1.2rem; margin-left: .8rem; }
```
